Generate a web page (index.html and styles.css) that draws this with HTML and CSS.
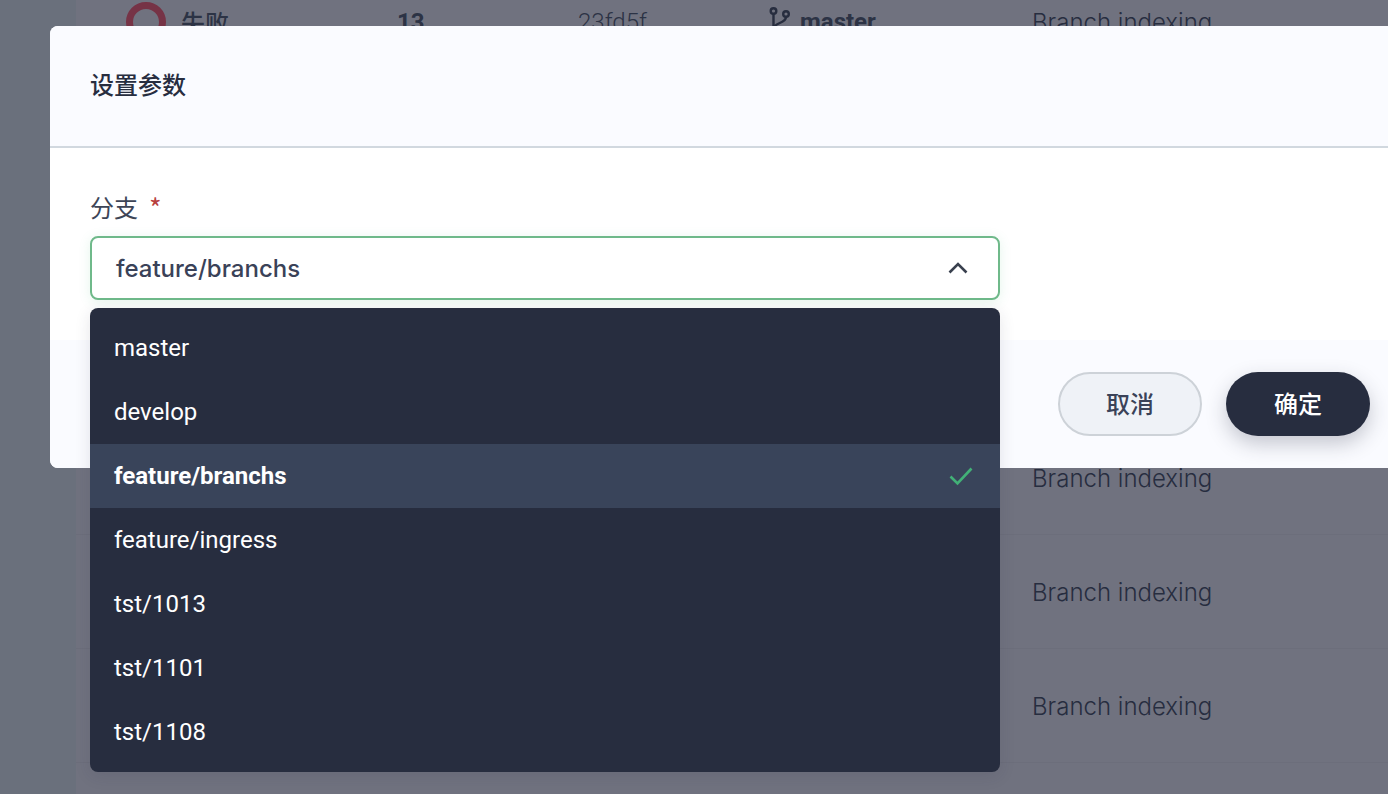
FILE: index.html
```html
<!DOCTYPE html>
<html lang="zh-CN">
<head>
<meta charset="utf-8">
<title>设置参数</title>
<link rel="stylesheet" href="styles.css">
</head>
<body>
<div class="page">
  <aside class="sidebar"></aside>
  <main class="main">
    <div class="row">
      <span class="cell-status"><span class="ring"></span>失败</span>
      <span class="cell-num">13</span>
      <span class="cell-hash">23fd5f</span>
      <span class="cell-branch">
        <svg class="branch-icon" viewBox="0 0 24 30" width="24" height="30" fill="none" stroke="#272d3f" stroke-width="2.400"><circle cx="4.500" cy="4" r="2.800"/><circle cx="17" cy="7" r="2.800"/><circle cx="4.500" cy="26" r="2.800"/><path d="M4.500 7v16M17 10c0 7-12.500 5-12.500 12"/></svg>
        master
      </span>
      <span class="cell-cause">Branch indexing</span>
    </div>
    <div class="row"></div>
    <div class="row"></div>
    <div class="row"></div>
    <div class="row"><span class="cell-cause">Branch indexing</span></div>
    <div class="row"><span class="cell-cause">Branch indexing</span></div>
    <div class="row"><span class="cell-cause">Branch indexing</span></div>
    <div class="row"></div>
  </main>
</div>
<div class="modal">
  <header class="modal-head"><h2 class="modal-title">设置参数</h2></header>
  <section class="modal-body">
    <label class="field-label">分支<span class="req">*</span></label>
    <div class="select">
      <span class="select-value">feature/branchs</span>
      <svg class="chevron" viewBox="0 0 20 12" width="20" height="12" fill="none" stroke="#39404e" stroke-width="2.600"><path d="M1.500 10.500 10 2l8.500 8.500"/></svg>
    </div>
  </section>
  <footer class="modal-foot">
    <button class="btn btn-cancel"><span class="btn-text">取消</span></button>
    <button class="btn btn-ok"><span class="btn-text">确定</span></button>
  </footer>
</div>
<ul class="menu">
  <li class="opt">master</li>
  <li class="opt">develop</li>
  <li class="opt opt-on">feature/branchs
    <svg class="check" viewBox="0 0 24 20" width="24" height="20" fill="none" stroke="#42b077" stroke-width="2.600"><path d="M1.500 10.500 8.500 17.500 22.500 2.500"/></svg>
  </li>
  <li class="opt">feature/ingress</li>
  <li class="opt">tst/1013</li>
  <li class="opt">tst/1101</li>
  <li class="opt">tst/1108</li>
</ul>
</body>
</html>
```
FILE: styles.css
```css
* { box-sizing: border-box; }
html, body { margin: 0; height: 100%; overflow: hidden; }
body {
  font-family: Roboto, "Noto Sans CJK SC", sans-serif;
  background: #70727f;
  color: #272d3f;
}
.page { display: flex; height: 794px; overflow: hidden; }
.sidebar { width: 76px; background: #6a707c; flex: none; }
.main { flex: 1; margin-top: -35px; }
.row {
  height: 114px;
  padding-left: 50px;
  border-bottom: 1px solid #6c6e7b;
  display: grid;
  grid-template-columns: 271px 181px 192px 262px auto;
  align-items: center;
  font-size: 24px;
  color: #2c3345;
}
.row:has(> .cell-cause:only-child) > .cell-cause { grid-column: 5; }
.cell-status { display: flex; align-items: center; gap: 15px; font-weight: 500; }
.ring { width: 40px; height: 40px; border: 7px solid #763346; border-radius: 50%; }
.cell-num { font-weight: 700; }
.cell-branch { display: flex; align-items: center; gap: 5px; font-weight: 700; margin-left: -1px; }
.cell-branch .branch-icon { margin-right: 2px; }
.cell-hash { font-weight: 300; }
.cell-cause { font-family: Inter, "Noto Sans CJK SC", sans-serif; font-size: 24px; font-weight: 300; color: #272d3f; transform: translateY(1px); }

.modal {
  position: absolute;
  left: 50px;
  top: 26px;
  width: 1400px;
  height: 442px;
  border-radius: 8px 0 0 8px;
  overflow: hidden;
  display: flex;
  flex-direction: column;
  background: #fff;
}
.modal-head {
  height: 122px;
  flex: none;
  background: #fafbff;
  border-bottom: 2px solid #d1d8df;
  padding: 0 40px 0 41px;
  display: flex;
  align-items: center;
}
.modal-title {
  margin: 0 0 5px -1px;
  font-size: 24px;
  font-weight: 500;
  color: #272d3f;
  font-family: "Noto Sans CJK SC", sans-serif;
}
.modal-body { height: 192px; flex: none; padding: 40px 40px 0; }
.field-label {
  display: flex;
  align-items: center;
  height: 36px;
  font-size: 24px;
  color: #3d4557;
  font-family: "Noto Sans CJK SC", sans-serif;
}
.req { color: #b8403f; margin: 3px 0 0 11px; font-size: 27px; }
.select {
  width: 910px;
  height: 64px;
  margin-top: 12px;
  border: 2px solid #6fb98a;
  border-radius: 8px;
  box-shadow: 0 2px 12px rgba(80, 190, 130, 0.15);
  padding: 0 30px 0 24px;
  display: flex;
  align-items: center;
  justify-content: space-between;
  background: #fff;
}
.select-value { font-family: Inter, sans-serif; font-size: 24px; font-weight: 500; color: #3a4258; }
.modal-foot {
  flex: 1;
  background: #fafbff;
  padding: 32px 18px 0 0;
  display: flex;
  justify-content: flex-end;
  align-items: flex-start;
  gap: 24px;
  width: 1338px;
}
.btn {
  width: 144px;
  height: 64px;
  border-radius: 32px;
  font-family: "Noto Sans CJK SC", sans-serif;
  font-size: 24px;
  font-weight: 500;
  padding: 0 0 4px;
}
.btn-text { display: block; }
.btn-cancel { background: #eff2f7; border: 2px solid #cdd2d8; color: #3a4258; }
.btn-ok { background: #272d3f; border: 0; color: #fff; box-shadow: 0 8px 20px rgba(39, 45, 63, 0.25); }

.menu {
  position: absolute;
  left: 90px;
  top: 308px;
  width: 910px;
  margin: 0;
  padding: 8px 0;
  list-style: none;
  background: #272d3f;
  border-radius: 8px;
  box-shadow: 0 4px 16px rgba(39, 45, 63, 0.12);
}
.opt {
  height: 64px;
  padding: 0 27px 0 24px;
  display: flex;
  align-items: center;
  justify-content: space-between;
  font-size: 24px;
  color: #fff;
}
.opt-on { background: #39445a; font-weight: 700; }
```
